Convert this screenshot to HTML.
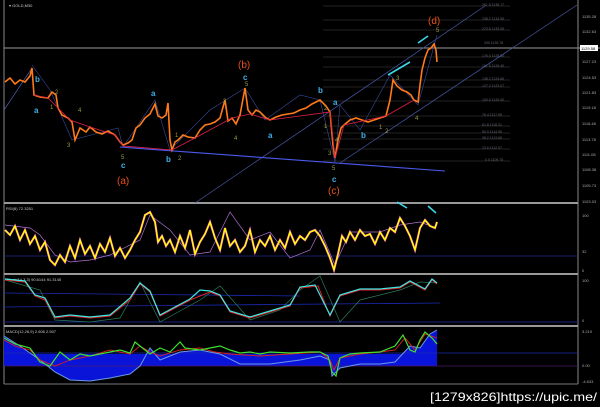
<!DOCTYPE html>
<html><head><meta charset="utf-8"><style>
html,body{margin:0;padding:0;background:#000;width:600px;height:407px;overflow:hidden}
svg{display:block}
text{font-family:"Liberation Sans",sans-serif}
</style></head><body>
<svg width="600" height="407" viewBox="0 0 600 407" xmlns="http://www.w3.org/2000/svg">
<rect width="600" height="407" fill="#000"/>
<line x1="4" y1="0" x2="4" y2="384" stroke="#888" stroke-width="1"/>
<line x1="578" y1="0" x2="578" y2="384" stroke="#888" stroke-width="1"/>
<line x1="4" y1="48" x2="600" y2="48" stroke="#999" stroke-width="1"/>
<rect x="4" y="202" width="574" height="2" fill="#999"/>
<rect x="4" y="273" width="574" height="2" fill="#999"/>
<rect x="4" y="325" width="574" height="2" fill="#999"/>
<line x1="4" y1="384" x2="578" y2="384" stroke="#777"/>
<text x="9" y="7" fill="#ccc" font-size="4">▾ GOLD,M30</text>
<g fill="#aaa" font-size="4">
<text x="582" y="18">1135.28</text><text x="582" y="33">1132.63</text>
<text x="582" y="63">1127.23</text><text x="582" y="79">1124.53</text>
<text x="582" y="94">1121.83</text><text x="582" y="109">1119.18</text>
<text x="582" y="125">1116.48</text><text x="582" y="141">1113.78</text>
<text x="582" y="156">1111.08</text><text x="582" y="171">1108.38</text>
<text x="582" y="187">1105.73</text><text x="582" y="203">1103.03</text>
<text x="582" y="217">100</text><text x="582" y="253">32</text><text x="582" y="272">0</text>
<text x="582" y="282">100</text><text x="582" y="322">0</text>
<text x="582" y="333">3.219</text><text x="582" y="367">0.00</text><text x="582" y="383">-4.633</text>
</g>
<rect x="580" y="45" width="18" height="6" fill="#fff"/>
<text x="581" y="50" fill="#000" font-size="4">1129.58</text>
<g stroke="#444" stroke-width="0.6">
<line x1="323" y1="6" x2="510" y2="6"/><line x1="323" y1="20" x2="510" y2="20"/>
<line x1="323" y1="30" x2="510" y2="30"/><line x1="323" y1="57" x2="510" y2="57"/>
<line x1="323" y1="67" x2="510" y2="67"/><line x1="323" y1="80" x2="510" y2="80"/>
<line x1="323" y1="87" x2="510" y2="87"/><line x1="323" y1="101" x2="510" y2="101"/>
<line x1="323" y1="116" x2="510" y2="116"/><line x1="323" y1="126" x2="510" y2="126"/>
<line x1="323" y1="133" x2="510" y2="133"/><line x1="323" y1="139" x2="510" y2="139"/>
<line x1="323" y1="149" x2="510" y2="149"/><line x1="323" y1="161" x2="510" y2="161"/>
</g>
<g fill="#667" font-size="3.5">
<text x="482" y="6">261.8 1136.77</text><text x="482" y="20">238.2 1134.55</text>
<text x="482" y="30">223.6 1133.05</text><text x="484" y="44">200 1130.78</text>
<text x="482" y="57">176.4 1128.50</text><text x="482" y="67">161.8 1126.40</text>
<text x="482" y="80">138.2 1124.65</text><text x="482" y="87">127.2 1123.07</text>
<text x="482" y="101">100.0 1120.00</text><text x="482" y="116">76.4 1117.95</text>
<text x="482" y="126">61.8 1116.31</text><text x="482" y="133">50.0 1114.95</text>
<text x="482" y="139">38.2 1113.66</text><text x="482" y="149">23.6 1112.07</text>
<text x="485" y="161">0.0 1109.75</text>
</g>
<g stroke="#4a5aa8" stroke-width="0.7">
<line x1="195" y1="203" x2="485" y2="6"/>
<line x1="340" y1="163" x2="577" y2="5"/>
<line x1="4" y1="110" x2="32" y2="68"/>
</g>
<line x1="120" y1="147" x2="445" y2="171" stroke="#4a5aee" stroke-width="1.1"/>
<polyline fill="none" stroke="#3a4a9a" stroke-width="0.6" points="32,65 50,90 72,140 118,128 123,147 155,100 170,150 210,110 245,88 265,120 300,95 320,100 335,162 340,105 360,130 390,75 418,105 437,35"/>
<polyline fill="none" stroke="#ff7a1a" stroke-width="1.6" points="5,82 10,78 15,84 20,80 25,82 30,76 32,68 34,95 40,97 48,98 52,92 56,95 58,108 62,115 68,118 72,122 75,140 80,128 86,132 90,127 96,132 102,134 108,131 115,135 120,142 123,145 128,143 132,140 136,128 140,125 145,118 150,114 155,104 158,116 162,118 166,115 168,103 170,140 172,150 175,142 178,140 183,135 188,137 195,138 200,130 205,125 210,124 215,122 220,118 225,100 228,121 232,118 236,124 240,115 245,88 248,110 252,115 256,110 260,112 266,118 270,120 276,117 282,115 288,114 294,113 300,110 306,108 312,104 320,100 326,106 330,112 333,145 335,158 338,140 341,128 344,125 350,120 356,118 362,120 368,122 374,120 380,118 386,116 390,100 393,80 397,86 402,90 407,92 411,95 414,100 418,102 420,85 422,70 425,58 428,50 431,48 434,44 436,50 437,62"/>
<polyline fill="none" stroke="#e0204a" stroke-width="0.8" points="34,95 48,98 58,108 70,120 90,127 115,135 123,146 172,150 195,138 232,118 250,114 270,120 330,112 335,158 344,125 386,116 414,100"/>
<g font-size="8" fill="#3fb0e8" font-weight="bold">
<text x="35" y="82">b</text><text x="34" y="113">a</text><text x="121" y="168">c</text>
<text x="151" y="96">a</text><text x="166" y="162">b</text><text x="243" y="80">c</text>
<text x="268" y="138">a</text><text x="318" y="93">b</text><text x="333" y="105">a</text>
<text x="332" y="182">c</text><text x="361" y="138">b</text>
</g>
<g font-size="6" fill="#9a9a40">
<text x="55" y="94">2</text><text x="50" y="109">1</text><text x="78" y="112">4</text>
<text x="67" y="147">3</text><text x="121" y="159">5</text><text x="175" y="137">1</text>
<text x="178" y="160">2</text><text x="223" y="103">3</text><text x="234" y="140">4</text>
<text x="245" y="86">5</text><text x="324" y="110">2</text><text x="324" y="128">1</text>
<text x="328" y="155">3</text><text x="332" y="170">5</text><text x="335" y="142">4</text>
<text x="379" y="129">1</text><text x="385" y="133">2</text><text x="396" y="80">3</text>
<text x="415" y="120">4</text><text x="436" y="32">5</text>
</g>
<g font-size="10" fill="#e8501a">
<text x="117" y="184">(a)</text><text x="238" y="68">(b)</text>
<text x="328" y="194">(c)</text><text x="428" y="24">(d)</text>
</g>
<g stroke="#3ad8e8" stroke-width="1.6">
<line x1="388" y1="75" x2="410" y2="62"/><line x1="418" y1="43" x2="428" y2="36"/>
<line x1="397" y1="202" x2="407" y2="208"/><line x1="428" y1="206" x2="436" y2="213"/>
</g>
<text x="6" y="210" fill="#ccc" font-size="4">RSI(8) 72.3251</text>
<line x1="4" y1="256" x2="578" y2="256" stroke="#1a2a8a" stroke-width="0.7"/>
<polyline fill="none" stroke="#b070d0" stroke-width="0.7" points="5,225 30,228 40,235 55,255 70,262 90,260 110,255 140,240 150,215 170,230 190,255 210,252 230,212 250,240 270,232 290,258 310,250 320,230 335,265 350,232 380,232 400,225 420,222 436,228"/>
<polyline fill="none" stroke="#e030e0" stroke-width="2.2" points="5,230 10,235 15,226 20,240 25,230 30,244 35,236 40,250 45,242 50,260 55,265 60,255 65,262 70,246 75,258 80,240 85,254 90,246 95,258 100,244 105,252 110,238 115,256 120,248 125,258 130,250 135,240 140,232 145,215 150,212 155,222 158,242 162,236 166,246 170,240 175,252 180,236 185,248 190,230 195,254 200,242 205,234 210,222 215,238 220,250 225,228 230,246 235,240 240,252 245,246 250,230 255,252 260,240 265,246 270,236 275,250 280,240 285,248 290,232 295,244 300,236 305,240 310,232 315,230 320,236 325,246 330,258 334,270 338,254 342,236 346,242 350,232 355,240 360,230 365,236 370,234 375,244 380,232 385,240 390,228 395,232 400,218 405,226 410,236 415,250 420,228 425,220 430,226 435,228 437,222"/>
<polyline fill="none" stroke="#ffff00" stroke-width="1.5" points="5,230 10,235 15,226 20,240 25,230 30,244 35,236 40,250 45,242 50,260 55,265 60,255 65,262 70,246 75,258 80,240 85,254 90,246 95,258 100,244 105,252 110,238 115,256 120,248 125,258 130,250 135,240 140,232 145,215 150,212 155,222 158,242 162,236 166,246 170,240 175,252 180,236 185,248 190,230 195,254 200,242 205,234 210,222 215,238 220,250 225,228 230,246 235,240 240,252 245,246 250,230 255,252 260,240 265,246 270,236 275,250 280,240 285,248 290,232 295,244 300,236 305,240 310,232 315,230 320,236 325,246 330,258 334,270 338,254 342,236 346,242 350,232 355,240 360,230 365,236 370,234 375,244 380,232 385,240 390,228 395,232 400,218 405,226 410,236 415,250 420,228 425,220 430,226 435,228 437,222"/>
<text x="6" y="281" fill="#ccc" font-size="4">Stoch(14,3,3) 90.6144 91.3145</text>
<line x1="4" y1="293" x2="300" y2="296" stroke="#1a2ab0" stroke-width="0.8"/>
<line x1="4" y1="307" x2="440" y2="303" stroke="#1a2ab0" stroke-width="0.8"/>
<line x1="4" y1="322" x2="578" y2="322" stroke="#1a2ab0" stroke-width="0.8"/>
<polyline fill="none" stroke="#2a7a5a" stroke-width="0.7" points="5,280 40,290 55,320 90,322 120,318 140,282 160,322 200,300 220,286 250,320 280,310 300,290 320,276 340,322 360,300 400,290 420,282 437,283"/>
<polyline fill="none" stroke="#e02020" stroke-width="1" points="5,280 25,282 35,296 45,300 55,318 70,316 90,318 110,316 130,300 140,284 150,292 160,316 175,308 190,300 210,292 220,296 230,312 250,318 270,312 290,306 300,288 318,286 330,316 340,296 360,290 380,290 400,288 410,282 425,290 432,280 437,284"/>
<polyline fill="none" stroke="#40e8e8" stroke-width="1.2" points="5,279 25,281 35,295 45,298 55,317 70,315 90,317 110,315 130,298 140,283 150,291 160,315 175,307 190,299 200,290 210,291 220,295 230,311 250,317 270,311 290,305 300,287 315,285 330,315 340,295 360,289 380,289 400,287 410,281 425,289 432,279 437,283"/>
<text x="6" y="333" fill="#ccc" font-size="4">MACD(12,26,9) 2.606 2.507</text>
<path fill="#0a14d8" d="M4,336 L20,346 L40,360 L55,372 L70,380 L90,381 L110,378 L130,374 L140,366 L150,348 L160,360 L180,352 L200,350 L220,354 L240,364 L270,364 L300,360 L320,356 L330,360 L332,376 L340,368 L360,364 L380,364 L395,362 L410,346 L420,348 L430,334 L437,330 L437,366 L4,366 Z"/>
<rect x="4" y="354" width="433" height="12" fill="#0a14d8"/>
<line x1="4" y1="353" x2="578" y2="353" stroke="#1a2ab0" stroke-width="0.8"/>
<line x1="4" y1="366" x2="578" y2="366" stroke="#4a1a6a" stroke-width="0.8"/>
<polyline fill="none" stroke="#6a9ae8" stroke-width="1" points="4,336 20,346 40,360 55,372 70,380 90,381 110,378 130,374 140,366 150,348 160,360 180,352 200,350 220,354 240,364 270,364 300,360 320,356 330,360 332,376 340,368 360,364 380,364 395,362 410,346 420,348 430,334 437,330"/>
<polyline fill="none" stroke="#e02020" stroke-width="0.9" points="4,340 15,346 30,350 40,360 55,366 70,360 90,356 110,350 130,354 140,346 150,352 160,356 180,350 200,348 215,352 230,354 260,356 290,354 320,352 330,360 334,370 340,358 360,354 380,352 395,350 405,338 415,350 425,334 437,338"/>
<polyline fill="none" stroke="#40e030" stroke-width="1.2" points="4,338 15,344 30,348 40,362 50,366 60,352 70,360 80,354 90,356 100,354 110,352 120,350 130,353 135,342 140,346 150,354 160,348 170,352 180,342 185,348 200,350 210,348 220,346 230,350 240,353 250,352 260,354 270,352 290,353 310,352 320,352 328,356 332,372 336,376 340,358 350,354 360,353 380,352 395,346 403,335 410,350 415,352 420,340 425,332 432,338 437,344"/>
<text x="430" y="401" fill="#fff" font-size="12" font-family="Liberation Mono, monospace" textLength="167" lengthAdjust="spacingAndGlyphs">[1279x826]https://upic.me/</text>
</svg>
</body></html>
